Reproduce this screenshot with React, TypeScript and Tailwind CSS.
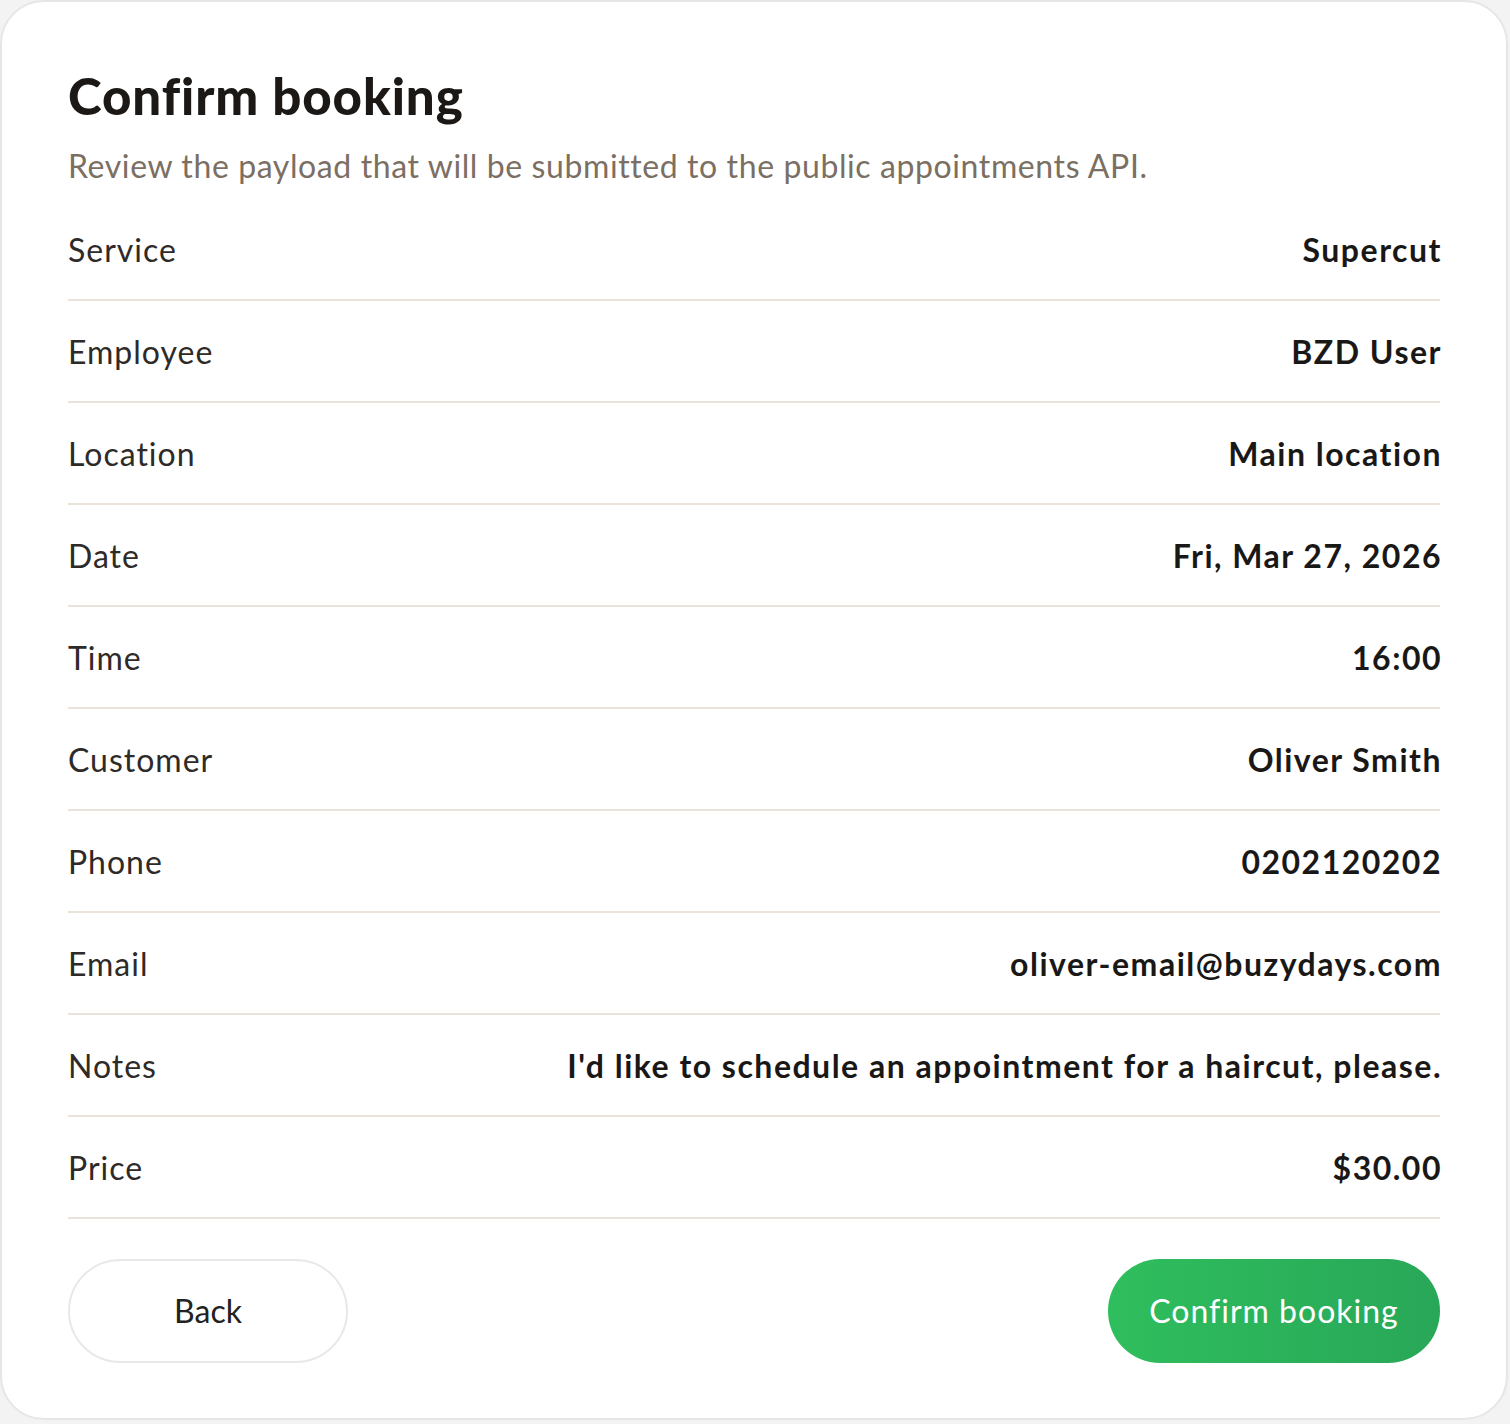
const ROWS = [
  { label: "Service", value: "Supercut" },
  { label: "Employee", value: "BZD User" },
  { label: "Location", value: "Main location" },
  { label: "Date", value: "Fri, Mar 27, 2026" },
  { label: "Time", value: "16:00" },
  { label: "Customer", value: "Oliver Smith" },
  { label: "Phone", value: "0202120202" },
  { label: "Email", value: "oliver-email@buzydays.com" },
  { label: "Notes", value: "I'd like to schedule an appointment for a haircut, please." },
  { label: "Price", value: "$30.00" },
];

export default function App() {
  return (
    <div className="min-h-screen bg-[#f3f3f3] font-['Lato','Noto_Sans',sans-serif]">
      <div className="w-[1508px] rounded-[44px] border-2 border-[#e6e6e6] bg-white px-[66px] pt-[62px] pb-[55px]">
        <h1 className="text-[51px] leading-[64px] font-black text-[#1b1815] tracking-[0.9px]">
          Confirm booking
        </h1>
        <p className="mt-[18px] text-[32px] leading-[40px] tracking-[0.6px] text-[#7b6f63]">
          Review the payload that will be submitted to the public appointments API.
        </p>

        <div className="mt-[13px]">
          {ROWS.map((row) => (
            <div
              key={row.label}
              className="flex items-center justify-between gap-8 border-b-2 border-[#ebe2d9] pt-[30px] pb-[29px]"
            >
              <span className="text-[32px] leading-[41px] tracking-[1px] text-[#2e2a27]">{row.label}</span>
              <span className="-mr-[2px] text-[32px] leading-[41px] tracking-[1.5px] font-bold text-[#1a1816] text-right">
                {row.value}
              </span>
            </div>
          ))}
        </div>

        <div className="mt-[40px] flex items-center justify-between">
          <button className="h-[104px] w-[280px] rounded-full border-2 border-[#e8e8e8] bg-white text-[32px] text-[#222]">
            Back
          </button>
          <button className="h-[104px] w-[332px] rounded-full bg-gradient-to-r from-[#2fbe5d] to-[#28a758] text-[32px] tracking-[1px] text-white">
            Confirm booking
          </button>
        </div>
      </div>
    </div>
  );
}
